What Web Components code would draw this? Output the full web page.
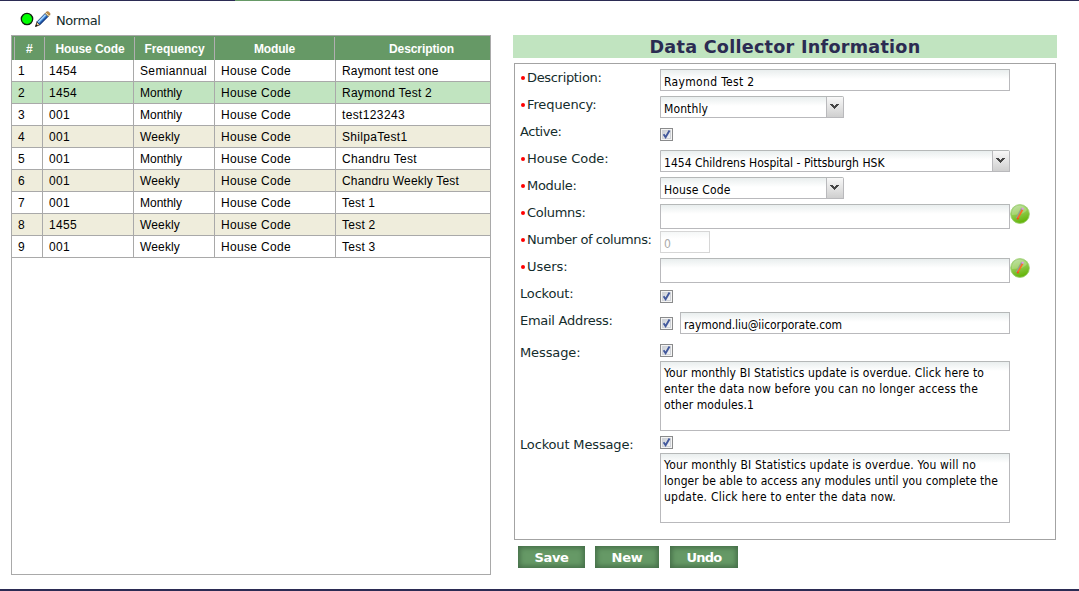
<!DOCTYPE html>
<html lang="en">
<head>
<meta charset="utf-8">
<title>Data Collector</title>
<style>
html,body{margin:0;padding:0;background:#fff}
body{width:1079px;height:591px;overflow:hidden;font-family:"DejaVu Sans",sans-serif;font-size:13px;color:#142c2c}
</style>
</head>
<body>
<collector-page></collector-page>
<script>
class Base extends HTMLElement {
  connectedCallback() {
    if (this.shadowRoot) return;
    this.attachShadow({ mode: "open" }).innerHTML = `<style>${this.css()}</style>${this.view()}`;
    this.ready();
  }
  attr(n, d = "") { return this.getAttribute(n) ?? d; }
  css() { return ""; }
  view() { return "<slot></slot>"; }
  ready() {}
}

/* One line of text spaced out to a set advance width. */
customElements.define("text-run", class extends Base {
  css() { return `:host{display:inline-block;white-space:nowrap} span{display:inline-block;white-space:pre}`; }
  view() { return `<span><slot></slot></span>`; }
  ready() {
    const w = +this.attr("w", 0);
    if (!w) return;
    const s = this.shadowRoot.querySelector("span");
    const n = this.textContent.length;
    s.style.letterSpacing = ((w - s.getBoundingClientRect().width) / n).toFixed(3) + "px";
    this.style.width = w + "px";
  }
});

customElements.define("status-bar", class extends Base {
  css() { return `:host{display:flex;align-items:center;height:34px;padding:2px 0 0 20px;box-sizing:border-box}
    svg{display:block;flex:none} .dot{margin-top:-1px} .pen{margin:0 5px 0 1px} .t{line-height:16px;margin-top:3px;letter-spacing:-.45px}`; }
  view() { return `
    <svg class="dot" width="14" height="14"><circle cx="7" cy="7" r="5.7" fill="#0f0" stroke="#102010" stroke-width="1.3"/></svg>
    <svg class="pen" width="16" height="16" viewBox="0 0 16 16">
      <path d="M.5 15.5 2 10.8 4.9 13.8Z" fill="#f0c98e" stroke="#2b2112" stroke-width=".8"/>
      <path d="M.2 15.8 1.2 13.2 2.8 14.8Z" fill="#111"/>
      <path d="M2 10.8 10.2 2.4 13.2 5.4 4.9 13.8Z" fill="#3f86d8" stroke="#143166" stroke-width=".8"/>
      <path d="M3.2 11.3 10.6 3.8" stroke="#a9d8ff" stroke-width="1.3"/>
      <path d="M4.8 13 12.4 5.3" stroke="#18408c" stroke-width="1.1"/>
      <path d="M10.2 2.4 11.5 1.1 14.5 4.1 13.2 5.4Z" fill="#f2e2b8" stroke="#8a6420" stroke-width=".6"/>
      <path d="M11.5 1.1C13 -.4 16.1 2.5 14.5 4.1Z" fill="#e3a13f" stroke="#7a4a18" stroke-width=".6"/>
    </svg>
    <span class="t"><slot></slot></span>`; }
});

customElements.define("data-grid", class extends Base {
  css() { return `
    :host{display:block;width:480px;height:540px;box-sizing:border-box;border:1px solid #a9a9a9;font:12px "Liberation Sans",Arial,sans-serif;color:#000}
    .head{display:grid;grid-template-columns:3px 30px 90px 80px 120px 155px;height:24px;background:#696;color:#fff;font-weight:bold}
    .head div{border-right:1px solid #b1aeb1;margin-top:1px;display:flex;align-items:center;justify-content:center;line-height:14px;padding-top:1px}
    .head div:nth-child(3){padding-left:1px}
    .head div:last-child{border:0;padding-left:18px}
    .row{display:grid;grid-template-columns:31px 91px 81px 121px 154px;height:22px}
    .row div{box-sizing:border-box;border-right:1px solid #a9a9a9;border-bottom:1px solid #a9a9a9;line-height:22px;padding-left:6px;overflow:hidden}
    .row div:last-child{border-right:0}
    .row.alt{background:#efeddc}.row.sel{background:#c1e4c0}`; }
  view() {
    const W = { "1454":28,"1455":28,"001":21,Semiannual:67,Monthly:42,Weekly:40,"House Code":70,
      "Raymont test one":96.5,"Raymond Test 2":90,test123243:63,ShilpaTest1:65.5,"Chandru Test":75,"Chandru Weekly Test":117,"Test 1":33,"Test 2":33.5,"Test 3":33.5 };
    const run = t => `<text-run w="${W[t] || 7}">${t}</text-run>`;
    const head = [["#",7],["House Code",69],["Frequency",60],["Module",41],["Description",65]];
    const rows = [["1454","Semiannual","Raymont test one"],["1454","Monthly","Raymond Test 2"],["001","Monthly","test123243"],
      ["001","Weekly","ShilpaTest1"],["001","Monthly","Chandru Test"],["001","Weekly","Chandru Weekly Test"],
      ["001","Monthly","Test 1"],["1455","Weekly","Test 2"],["001","Weekly","Test 3"]];
    return `<div class="head"><div></div>${head.map(([t,w]) => `<div><text-run w="${w}">${t}</text-run></div>`).join("")}</div>` +
      rows.map(([c,f,d], i) => `<div class="row ${i === 1 ? "sel" : i % 2 ? "alt" : ""}">${[String(i+1),c,f,"House Code",d].map(t => `<div>${run(t)}</div>`).join("")}</div>`).join("");
  }
});

const FIELD = `box-sizing:border-box;border:1px solid #b9b9bc;border-top-color:#b5b8b8;background:linear-gradient(#e9eeee,#fff 9px);color:#000;font:12px "DejaVu Sans Condensed","DejaVu Sans",sans-serif;font-stretch:condensed;`;

customElements.define("text-field", class extends Base {
  css() { return `:host{display:block;${FIELD}width:${this.attr("width","350")}px;height:${this.attr("height","22")}px;padding:3px 0 0 3px;line-height:18px}
    :host([disabled]){border-color:#d6d6d6;color:#aaa;background:linear-gradient(#f5f7f7,#fff 7px)}`; }
});

customElements.define("text-box", class extends Base {
  css() { return `:host{display:flex;flex-direction:column;${FIELD}width:350px;height:70px;padding:3px 0 0 3px;line-height:16px}`; }
});

customElements.define("combo-box", class extends Base {
  css() { return `:host{display:flex;${FIELD}width:${this.attr("width","184")}px;height:22px;border-radius:0 2px 0 0}
    .v{flex:1;padding:3px 0 0 3px;line-height:18px} .b{width:16px;border-left:1px solid #b9b9bc;background:linear-gradient(#f8f8f8,#e4e4e4 50%,#cfcfcf);display:flex;padding-left:0}
    svg{display:block;margin:7px 0 0 3px}`; }
  view() { return `<div class="v"><slot></slot></div><div class="b"><svg width="9" height="6" shape-rendering="crispEdges"><path d="M0 0h3v1h1v1h1v-1h1v-1h3v1h-1v1h-1v1h-1v1h-1v1h-1v-1h-1v-1h-1v-1h-1v-1h-1z" fill="#454545"/></svg></div>`; }
});

customElements.define("check-box", class extends Base {
  css() { return `:host{display:block;width:13px;height:13px} svg{display:block}`; }
  view() { return `<svg width="13" height="13"><defs><linearGradient id="g" x2="1" y2="1"><stop stop-color="#c9cdd4"/><stop offset="1" stop-color="#f8f8f8"/></linearGradient></defs>
    <rect x=".5" y=".5" width="12" height="12" fill="#f4f4f4" stroke="#8a8b8c"/><rect x="2.5" y="2.5" width="8" height="8" fill="url(#g)" stroke="#d0d3d8"/>
    <path d="M3.6 6.2 5.6 9.2 9.5 2.6" fill="none" stroke="#42589c" stroke-width="1.9"/></svg>`; }
});

customElements.define("edit-button", class extends Base {
  css() { return `:host{display:block;width:20px;height:20px} svg{display:block}`; }
  view() { return `<svg width="20" height="20"><defs><linearGradient id="b" x2=".35" y2="1"><stop stop-color="#b8dca0"/><stop offset=".5" stop-color="#94cd52"/><stop offset="1" stop-color="#66b60c"/></linearGradient></defs>
    <circle cx="10" cy="10" r="9.4" fill="url(#b)" stroke="#9bce70" stroke-width=".8"/><path d="M2 11A8 8 0 0 1 17 6Q14 11 2 11Z" fill="#fff" opacity=".2"/>
    <path d="M6.6 14.2 12.2 4.4" stroke="#93a38e" stroke-width="2.2"/><path d="M7.8 14.4 12.6 5.6" stroke="#ff6a22" stroke-width="1.6"/><path d="M12.2 5.6 13 4" stroke="#e294ec" stroke-width="2.2"/><path d="M7.4 15.4 8.2 13.9" stroke="#f8481a" stroke-width="1.8"/></svg>`; }
});

customElements.define("form-row", class extends Base {
  css() { return `:host{display:grid;grid-template-columns:140px 1fr;height:27px;box-sizing:border-box;padding-left:5px}
    :host([tall]){height:92px}
    .l{display:flex;line-height:16px;padding-top:6px;height:16px} :host([tall]) .l{padding-top:11px}
    i{width:4px;height:4px;border-radius:50%;background:#f00;margin:6px 2px 0 1px}
    .c{display:flex;align-items:flex-start;padding-top:5px}
    :host([tall]) .c{flex-direction:column;padding-top:0}
    ::slotted(check-box){margin-top:5px;margin-right:7px}
    :host([tall]) ::slotted(check-box){margin-top:10px;margin-bottom:4px}`; }
  view() { return `<div class="l">${this.hasAttribute("required") ? "<i></i>" : ""}<text-run w="${this.attr("lw") - 1.5}">${this.attr("label")}</text-run></div><div class="c"><slot></slot></div>`; }
});

customElements.define("action-button", class extends Base {
  css() { return `:host{display:flex;justify-content:center;box-sizing:border-box;width:${this.attr("width")}px;height:22px;background:#696;box-shadow:inset 0 0 5px 2px #456e48;color:#fff;font-weight:bold;line-height:24px}`; }
});

customElements.define("collector-form", class extends Base {
  css() { return `:host{display:block;width:544px}
    h1{margin:0 0 5px;height:23px;background:#c1e4c0;color:#2b2b52;font-size:17.6px;line-height:24px;text-align:center}
    .box{box-sizing:border-box;margin-left:1px;width:542px;height:477px;border:1px solid #a3a3a3}
    .btns{display:flex;padding:6px 0 0 5px}
    .btns action-button:nth-child(2){margin:0 11px 0 10px}`; }
  view() {
    const t = (s, w) => `<text-run w="${w}">${s}</text-run>`;
    return `<h1>${t("Data Collector Information", 271)}</h1>
    <div class="box">
      <form-row required label="Description:" lw="76"><text-field>${t("Raymond Test 2", 90.5)}</text-field></form-row>
      <form-row required label="Frequency:" lw="71"><combo-box>${t("Monthly", 44)}</combo-box></form-row>
      <form-row label="Active:" lw="43"><check-box></check-box></form-row>
      <form-row required label="House Code:" lw="83"><combo-box width="350">${t("1454 Childrens Hospital - Pittsburgh HSK", 220.5)}</combo-box></form-row>
      <form-row required label="Module:" lw="51"><combo-box>${t("House Code", 66.5)}</combo-box></form-row>
      <form-row required label="Columns:" lw="60"><text-field height="25"></text-field><edit-button></edit-button></form-row>
      <form-row required label="Number of columns:" lw="126"><text-field width="50" disabled>${t("0", 7)}</text-field></form-row>
      <form-row required label="Users:" lw="42"><text-field height="25"></text-field><edit-button></edit-button></form-row>
      <form-row label="Lockout:" lw="55"><check-box></check-box></form-row>
      <form-row label="Email Address:" lw="94"><check-box></check-box><text-field width="330">${t("raymond.liu@iicorporate.com", 158)}</text-field></form-row>
      <form-row tall label="Message:" lw="62"><check-box></check-box><text-box>${t("Your monthly BI Statistics update is overdue. Click here to", 320)}${t("enter the data now before you can no longer access the", 314)}${t("other modules.1", 90)}</text-box></form-row>
      <form-row tall label="Lockout Message:" lw="115"><check-box></check-box><text-box>${t("Your monthly BI Statistics update is overdue. You will no", 312)}${t("longer be able to access any modules until you complete the", 334)}${t("update. Click here to enter the data now.", 232)}</text-box></form-row>
    </div>
    <div class="btns"><action-button width="67">${t("Save", 34)}</action-button><action-button width="64">${t("New", 31)}</action-button><action-button width="68">${t("Undo", 35)}</action-button></div>`;
  }
});

customElements.define("collector-page", class extends Base {
  css() { return `:host{display:flex;flex-direction:column;width:1079px;height:591px}
    .top{height:1px;flex:none;background:linear-gradient(90deg,#2b2b54 235px,#696 235px 300px,#2b2b54 300px)}
    .main{display:flex;gap:22px;padding-left:11px;height:554px;flex:none}
    .bottom{height:2px;background:#2b2b54}`; }
  view() { return `<div class="top"></div><status-bar>Normal</status-bar><div class="main"><data-grid></data-grid><collector-form></collector-form></div><div class="bottom"></div>`; }
});
</script>
</body>
</html>
